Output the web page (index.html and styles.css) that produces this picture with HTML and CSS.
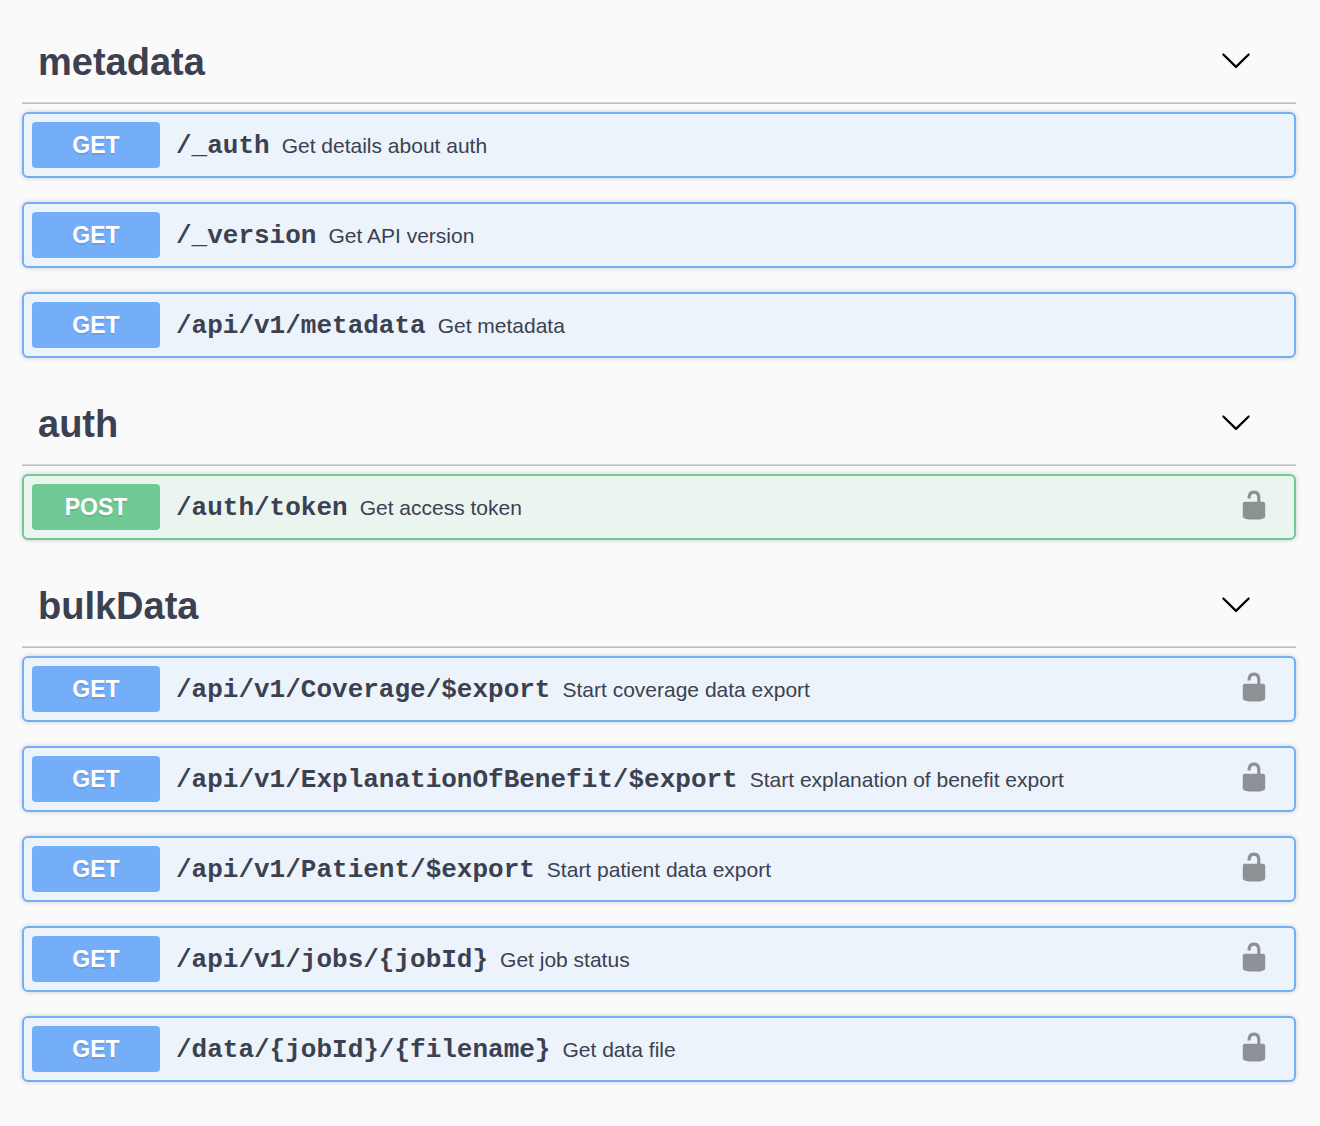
FILE: index.html
```html
<!DOCTYPE html>
<html lang="en">
<head>
<meta charset="utf-8">
<meta name="viewport" content="width=device-width, initial-scale=1">
<title>API operations</title>
<link rel="stylesheet" href="styles.css">
</head>
<body>
<svg class="sprite" aria-hidden="true">
  <symbol id="arrow" viewBox="0 0 20 20"><path d="M17.418 6.109c.272-.268.709-.268.979 0s.271.701 0 .969l-7.908 7.83c-.27.268-.707.268-.979 0l-7.908-7.83c-.27-.268-.27-.701 0-.969.271-.268.709-.268.979 0L10 13.25l7.418-7.141z"/></symbol>
  <symbol id="unlocked" viewBox="0 0 20 20"><path d="M15.8 8H14V5.6C14 2.703 12.665 1 10 1 7.334 1 6 2.703 6 5.6V6h2v-.801C8 3.754 8.797 3 10 3c1.203 0 2 .754 2 2.199V8H4c-.553 0-1 .646-1 1.199V17c0 .549.428 1.139.951 1.307l1.197.387C5.672 18.861 6.55 19 7.1 19h5.8c.549 0 1.428-.139 1.951-.307l1.196-.387c.524-.167.953-.757.953-1.306V9.199C17 8.646 16.352 8 15.8 8z"/></symbol>
</svg>
<main class="api">
  <section class="tag">
    <header class="tag-header">
      <h2 class="tag-name">metadata</h2>
      <button class="icon-button" type="button" aria-label="Collapse metadata" aria-expanded="true"><svg class="icon"><use href="#arrow"/></svg></button>
    </header>
    <div class="operations">
      <div class="operation get">
        <button class="summary" type="button"><span class="method">GET</span><span class="path">/_auth</span><span class="description">Get details about auth</span></button>
      </div>
      <div class="operation get">
        <button class="summary" type="button"><span class="method">GET</span><span class="path">/_version</span><span class="description">Get API version</span></button>
      </div>
      <div class="operation get">
        <button class="summary" type="button"><span class="method">GET</span><span class="path">/api/v1/metadata</span><span class="description">Get metadata</span></button>
      </div>
    </div>
  </section>
  <section class="tag">
    <header class="tag-header">
      <h2 class="tag-name">auth</h2>
      <button class="icon-button" type="button" aria-label="Collapse auth" aria-expanded="true"><svg class="icon"><use href="#arrow"/></svg></button>
    </header>
    <div class="operations">
      <div class="operation post">
        <button class="summary" type="button"><span class="method">POST</span><span class="path">/auth/token</span><span class="description">Get access token</span></button>
        <button class="icon-button lock" type="button" aria-label="Authorize"><svg class="icon"><use href="#unlocked"/></svg></button>
      </div>
    </div>
  </section>
  <section class="tag">
    <header class="tag-header">
      <h2 class="tag-name">bulkData</h2>
      <button class="icon-button" type="button" aria-label="Collapse bulkData" aria-expanded="true"><svg class="icon"><use href="#arrow"/></svg></button>
    </header>
    <div class="operations">
      <div class="operation get">
        <button class="summary" type="button"><span class="method">GET</span><span class="path">/api/v1/Coverage/$export</span><span class="description">Start coverage data export</span></button>
        <button class="icon-button lock" type="button" aria-label="Authorize"><svg class="icon"><use href="#unlocked"/></svg></button>
      </div>
      <div class="operation get">
        <button class="summary" type="button"><span class="method">GET</span><span class="path">/api/v1/ExplanationOfBenefit/$export</span><span class="description">Start explanation of benefit export</span></button>
        <button class="icon-button lock" type="button" aria-label="Authorize"><svg class="icon"><use href="#unlocked"/></svg></button>
      </div>
      <div class="operation get">
        <button class="summary" type="button"><span class="method">GET</span><span class="path">/api/v1/Patient/$export</span><span class="description">Start patient data export</span></button>
        <button class="icon-button lock" type="button" aria-label="Authorize"><svg class="icon"><use href="#unlocked"/></svg></button>
      </div>
      <div class="operation get">
        <button class="summary" type="button"><span class="method">GET</span><span class="path">/api/v1/jobs/{jobId}</span><span class="description">Get job status</span></button>
        <button class="icon-button lock" type="button" aria-label="Authorize"><svg class="icon"><use href="#unlocked"/></svg></button>
      </div>
      <div class="operation get">
        <button class="summary" type="button"><span class="method">GET</span><span class="path">/data/{jobId}/{filename}</span><span class="description">Get data file</span></button>
        <button class="icon-button lock" type="button" aria-label="Authorize"><svg class="icon"><use href="#unlocked"/></svg></button>
      </div>
    </div>
  </section>
</main>
</body>
</html>
```
FILE: styles.css
```css
* {
  box-sizing: border-box;
}

body {
  margin: 0;
  background: #fafafa;
  color: #3b4151;
  font-family: "Liberation Sans", Arial, sans-serif;
}

button {
  margin: 0;
  padding: 0;
  border: 0;
  background: none;
  color: inherit;
  font: inherit;
  cursor: pointer;
}

.sprite {
  display: none;
}

.api {
  display: flex;
  flex-direction: column;
  gap: 4px;
  padding: 0 24px 44px 22px;
}

.tag-header {
  display: flex;
  align-items: center;
  justify-content: space-between;
  padding: 40px 44px 19px 16px;
  border-bottom: 1px solid #bdbdbf;
  box-shadow: inset 0 -1px 0 #d8d8d9;
}

.tag-name {
  margin: 0;
  font-size: 38px;
  line-height: 44px;
}

.icon-button {
  display: flex;
  padding-bottom: 5px;
  color: #000;
}

.icon {
  display: block;
  width: 32px;
  height: 32px;
  fill: currentColor;
}

.operations {
  display: flex;
  flex-direction: column;
  gap: 24px;
  padding-top: 8px;
}

.operation {
  display: flex;
  align-items: center;
  padding: 8px 24px 8px 8px;
  border: 2px solid var(--accent);
  border-radius: 6px;
  background: var(--tint);
  box-shadow: 0 0 5px rgba(0, 0, 0, 0.19);
}

.get {
  --accent: #74aef9;
  --tint: #ecf3fb;
}

.post {
  --accent: #70c994;
  --tint: #ebf5f0;
}

.summary {
  display: flex;
  flex: 1;
  align-items: center;
  text-align: left;
}

.method {
  width: 128px;
  border-radius: 4px;
  background: var(--accent);
  color: #fff;
  font-size: 23px;
  font-weight: 700;
  line-height: 46px;
  text-align: center;
  text-shadow: 0 2px 0 rgba(0, 0, 0, 0.1);
}

.path {
  padding: 2px 12px 0 16px;
  font-family: "Courier New", "Liberation Mono", monospace;
  font-size: 26px;
  font-weight: 700;
}

.description {
  padding-top: 2px;
  font-size: 21px;
}

.lock {
  opacity: 0.4;
}
```
